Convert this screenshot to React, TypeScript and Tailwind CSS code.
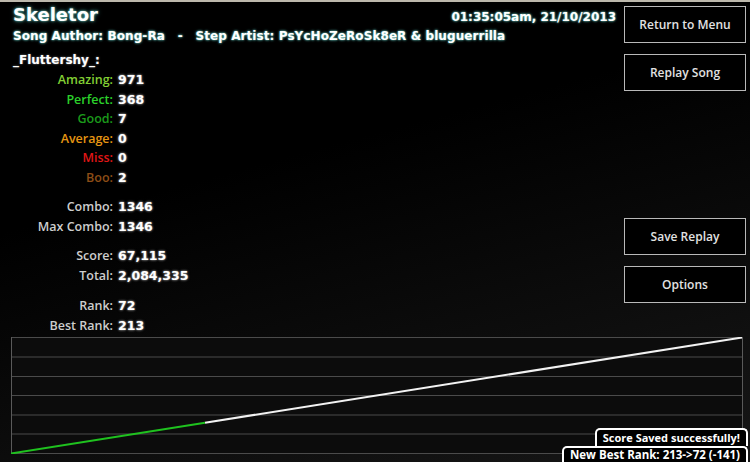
import React from "react";

type Stat = { label: string; value: string; color: string };

const judgements: Stat[] = [
  { label: "Amazing", value: "971", color: "text-[#82cf34]" },
  { label: "Perfect", value: "368", color: "text-[#2bd12b]" },
  { label: "Good", value: "7", color: "text-[#1b9a1b]" },
  { label: "Average", value: "0", color: "text-[#e59512]" },
  { label: "Miss", value: "0", color: "text-[#e01616]" },
  { label: "Boo", value: "2", color: "text-[#8c4d16]" },
];

const combos: Stat[] = [
  { label: "Combo", value: "1346", color: "text-[#cdcdcd]" },
  { label: "Max Combo", value: "1346", color: "text-[#cdcdcd]" },
];

const scores: Stat[] = [
  { label: "Score", value: "67,115", color: "text-[#cdcdcd]" },
  { label: "Total", value: "2,084,335", color: "text-[#cdcdcd]" },
];

const ranks: Stat[] = [
  { label: "Rank", value: "72", color: "text-[#cdcdcd]" },
  { label: "Best Rank", value: "213", color: "text-[#cdcdcd]" },
];

const StatGroup = ({ rows, className = "" }: { rows: Stat[]; className?: string }) => (
  <div className={`grid grid-cols-[100px_1fr] gap-x-[5px] ${className}`}>
    {rows.map((row) => (
      <React.Fragment key={row.label}>
        <span
          className={`text-right text-[12.5px] font-semibold leading-[19.5px] ${row.color}`}
          style={{ fontFamily: '"Open Sans", "Noto Sans", sans-serif' }}
        >
          {row.label}:
        </span>
        <span
          className="text-[12.5px] font-bold leading-[19.5px] text-white [text-shadow:0_0_2px_#9a9a9a,0_0_3px_#666]"
          style={{ fontFamily: '"DejaVu Sans", Verdana, sans-serif' }}
        >
          {row.value}
        </span>
      </React.Fragment>
    ))}
  </div>
);

const MenuButton = ({ label, className = "" }: { label: string; className?: string }) => (
  <button
    className={`flex h-[37px] w-[122px] items-center justify-center border border-[#b9b9b9] bg-black text-[12px] font-semibold text-[#e2e2e2] ${className}`}
    style={{ fontFamily: '"Open Sans", "Noto Sans", sans-serif' }}
  >
    {label}
  </button>
);

// progression graph: green for the played part, white for the rest
const ScoreGraph = () => {
  const w = 732;
  const h = 117;
  const rows = [0.5, 20, 39.5, 58.5, 78, 97, 116.5];
  const splitX = 194;
  const splitY = 116.5 - (splitX * 116) / 731;
  return (
    <svg width={w} height={h} viewBox={`0 0 ${w} ${h}`} className="block">
      <rect x={0} y={0} width={w} height={h} fill="#0c0c0c" />
      {rows.map((y) => (
        <line key={y} x1={0} x2={w} y1={y} y2={y} stroke="#4b4b4b" strokeWidth={1} />
      ))}
      <line x1={0.5} x2={0.5} y1={0} y2={h} stroke="#5a5a5a" strokeWidth={1} />
      <line x1={w - 0.5} x2={w - 0.5} y1={0} y2={h} stroke="#5a5a5a" strokeWidth={1} />
      <line x1={splitX} y1={splitY} x2={731} y2={0.5} stroke="#f2f2f2" strokeWidth={2} />
      <line x1={0} y1={116.5} x2={splitX} y2={splitY} stroke="#1fc21f" strokeWidth={2} />
    </svg>
  );
};

const Toast = ({ text, className = "" }: { text: string; className?: string }) => (
  <div
    className={`rounded-t-[5px] border-2 border-b-0 border-white bg-black px-[6px] font-bold text-white ${className}`}
    style={{ fontFamily: '"Open Sans", "Noto Sans", sans-serif' }}
  >
    {text}
  </div>
);

export default function App() {
  const heading = { fontFamily: '"DejaVu Sans", Verdana, sans-serif' };

  return (
    <div className="relative flex h-[462px] w-[750px] flex-col overflow-hidden border-t-2 border-[#bcb8ac] bg-[linear-gradient(165deg,#000_35%,#171717_100%)]">
      <div className="flex flex-1">
        <div className="w-[616px] pl-[13px]">
          <div className="flex items-baseline justify-between pt-[2px]">
            <h1
              className="text-[18px] font-bold leading-[22px] text-white [text-shadow:0_0_2px_#6fc9c0,0_0_4px_#3f8f88]"
              style={heading}
            >
              Skeletor
            </h1>
            <span
              className="text-[12px] font-bold text-white [text-shadow:0_0_2px_#6fc9c0,0_0_3px_#3f8f88]"
              style={heading}
            >
              01:35:05am, 21/10/2013
            </span>
          </div>
          <p
            className="mt-[3px] whitespace-pre text-[12px] font-bold leading-[14px] tracking-[0.08px] text-white [text-shadow:0_0_2px_#6fc9c0,0_0_3px_#3f8f88]"
            style={heading}
          >
            {"Song Author: Bong-Ra   -   Step Artist: PsYcHoZeRoSk8eR & bluguerrilla"}
          </p>
          <p
            className="mt-[10px] text-[12px] font-bold leading-[15px] text-white [text-shadow:0_0_2px_#8a8a8a]"
            style={heading}
          >
            _Fluttershy_:
          </p>

          <StatGroup rows={judgements} className="mt-[2px]" />
          <StatGroup rows={combos} className="mt-[10px]" />
          <StatGroup rows={scores} className="mt-[10px]" />
          <StatGroup rows={ranks} className="mt-[11px]" />
        </div>

        <div className="ml-[8px] mt-[4px] flex flex-col">
          <MenuButton label="Return to Menu" />
          <MenuButton label="Replay Song" className="mt-[11px]" />
          <MenuButton label="Save Replay" className="mt-[127px]" />
          <MenuButton label="Options" className="mt-[11px]" />
        </div>
      </div>

      <div className="mb-[8px] ml-[11px]">
        <ScoreGraph />
      </div>

      <div className="absolute bottom-0 right-[2px] flex flex-col items-end">
        <Toast text="Score Saved successfully!" className="h-[18px] text-[11px] leading-[16px]" />
        <Toast text="New Best Rank: 213->72 (-141)" className="h-[16px] text-[11.5px] leading-[14px]" />
      </div>
    </div>
  );
}
